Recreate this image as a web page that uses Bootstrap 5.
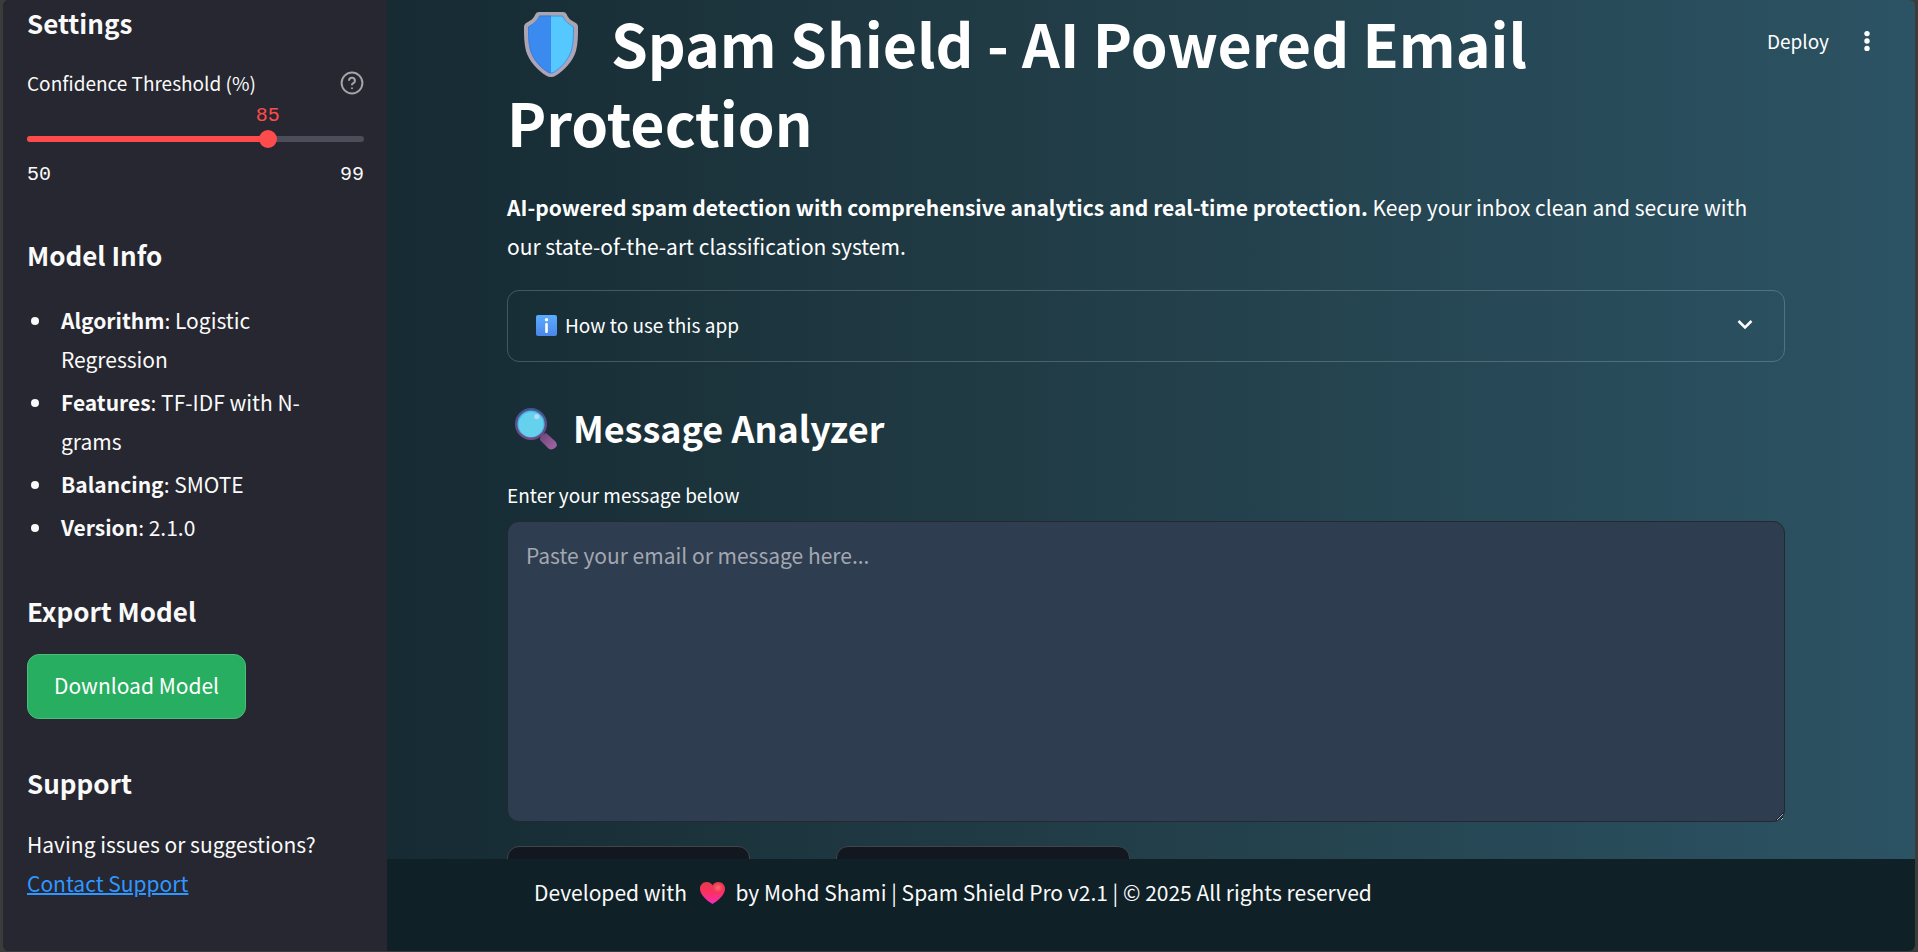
<!DOCTYPE html>
<html lang="en">
<head>
<meta charset="utf-8">
<meta name="viewport" content="width=device-width, initial-scale=1">
<title>Spam Shield</title>
<link rel="stylesheet" href="https://cdn.jsdelivr.net/npm/bootstrap@5.3.0/dist/css/bootstrap.min.css">
<style>
  :root { --app-font: "Noto Sans CJK SC", "Noto Sans", sans-serif; --app-red: #ff4b4b; --app-text: #fafafa; }
  body { background: #3b3b3b; color: var(--app-text); font-family: var(--app-font); font-size: 21px; line-height: 39px; }
  .app-shell { height: 100vh; padding: 0 3px 1px; }
  .app-frame { background: linear-gradient(to right, #0f2027, #203a43, #2c5364); border-radius: 6px; }
  .app-sidebar { width: 384px; background: #262730; padding: 5px 23px 0 24px; }
  .app-sidebar h2 { font-size: 26px; line-height: 36px; font-weight: 600; margin: 0; }
  .field-label { font-size: 19px; line-height: 32px; }
  .threshold-head { margin-top: 26px; }
  .mono-text { font-family: "Liberation Mono", monospace; font-size: 20px; line-height: 24px; }
  .slider-value { height: 24px; margin-top: 5px; color: var(--app-red); }
  .slider-value output { position: absolute; transform: translateX(-50%); }
  .slider-row { height: 18px; margin-top: 2px; }
  .slider-row .progress { height: 6px; background: #4c4d59; border-radius: 3px; }
  .slider-row .progress-bar { background: var(--app-red); }
  .slider-row input { position: absolute; top: 0; left: -9px; width: calc(100% + 18px); height: 18px; margin: 0; appearance: none; background: transparent; }
  .slider-row input::-webkit-slider-thumb { appearance: none; width: 18px; height: 18px; border-radius: 50%; background: var(--app-red); }
  .slider-ends { margin: 15px 0 50px; }
  .info-list { list-style: none; padding: 0 24px 0 34px; margin: 28px 0 46px; }
  .info-list li + li { margin-top: 4px; }
  .info-list li::before { content: ""; display: inline-block; width: 8px; height: 8px; margin: 0 22px 0 -30px; border-radius: 50%; background: currentColor; vertical-align: 4px; }
  .download-btn { height: 65px; margin: 25px 0 46px; padding: 0 26px 2px; background: #27ae60; border: 1px solid #4dbc7c; border-radius: 12px; color: #fff; font-size: 21px; }
  .support-link { color: #2f97ff; text-decoration-thickness: 2px; }
  .app-content { padding: 3px 130px 0 120px; color: #fff; }
  .app-content h1 { font-size: 59px; line-height: 79px; font-weight: 700; margin: 0 0 27px; }
  .app-content h2 { font-size: 36px; line-height: 50px; font-weight: 600; margin: 40px 0 27px; }
  .app-content svg, .app-footer svg { vertical-align: baseline; }
  .h1-icon { width: 54px; height: 65px; margin: 0 33px -9px 17px; }
  .h2-icon { width: 42px; height: 42px; margin: 0 16px -7px 8px; }
  .toolbar { position: absolute; top: 22px; right: 30px; }
  .toolbar button, .how-to { background: none; border: 0; color: #fff; font-size: 19px; line-height: 38px; padding: 0; }
  .toolbar .menu-btn { margin-left: 20px; }
  .app-content .how-to { height: 72px; margin-top: 24px; padding: 0 27px 2px 28px; border: 1px solid rgba(250,250,250,.2); border-radius: 12px; }
  .message-box { height: 301px; margin-top: 10px; padding: 14px 18px; border: 1px solid #262730; border-radius: 12px; font-size: 21px; line-height: 39px; }
  .message-box, .message-box:focus { color: #fff; background: #2e3d50; }
  .message-box::placeholder { color: #a3a8b0; opacity: 1; }
  .action-row { gap: 86px; margin-top: 24px; }
  .action-btn { height: 60px; background: #131720; border: 1px solid #42444b; border-radius: 12px; }
  .analyze-btn { width: 19%; }
  .clear-btn { width: 23%; }
  .app-footer { height: 92px; background: #0f2027; padding: 14px 147px; }
  .heart { width: 25px; height: 22px; margin: 0 6px -3px 8px; }
</style>
</head>
<body>
<div class="app-shell">
  <div class="app-frame d-flex h-100 overflow-hidden">
    <aside class="app-sidebar flex-shrink-0 overflow-hidden">
      <h2>Settings</h2>
      <div class="threshold-head d-flex justify-content-between align-items-center">
        <label for="threshold" class="field-label">Confidence Threshold (%)</label>
        <svg width="24" height="24" viewBox="0 0 24 24" fill="none" stroke="#a3a4a8" stroke-width="2" stroke-linecap="round" stroke-linejoin="round" aria-hidden="true"><circle cx="12" cy="12" r="10.4"/><path d="M9 9a3 3 0 0 1 5.9 1c0 2-2.9 2.6-2.9 3.6M12 17.2v.1"/></svg>
      </div>
      <div class="slider-value position-relative mono-text"><output for="threshold" style="left:71.43%">85</output></div>
      <div class="slider-row position-relative d-flex align-items-center">
        <div class="progress w-100"><div class="progress-bar" style="width:71.43%"></div></div>
        <input type="range" id="threshold" min="50" max="99" value="85">
      </div>
      <div class="slider-ends d-flex justify-content-between mono-text"><span>50</span><span>99</span></div>

      <h2>Model Info</h2>
      <ul class="info-list">
        <li><b>Algorithm</b>: Logistic Regression</li>
        <li><b>Features</b>: TF-IDF with N-grams</li>
        <li><b>Balancing</b>: SMOTE</li>
        <li><b>Version</b>: 2.1.0</li>
      </ul>

      <h2>Export Model</h2>
      <button type="button" class="btn download-btn">Download Model</button>

      <h2>Support</h2>
      <p class="mb-0 mt-4">Having issues or suggestions?<br><a href="#" class="support-link">Contact Support</a></p>
    </aside>

    <div class="d-flex flex-column flex-grow-1 position-relative overflow-hidden">
      <div class="toolbar d-flex align-items-center">
        <button type="button">Deploy</button>
        <button type="button" class="menu-btn d-flex" aria-label="Menu">
          <svg width="36" height="24" viewBox="0 0 36 24" fill="#fff"><circle cx="18" cy="4.6" r="2.7"/><circle cx="18" cy="12" r="2.7"/><circle cx="18" cy="19.4" r="2.7"/></svg>
        </button>
      </div>

      <main class="app-content flex-grow-1 overflow-hidden">
        <h1><svg class="h1-icon" viewBox="0 0 54 65" aria-hidden="true">
            <defs>
              <linearGradient id="rim" x2="0" y2="1"><stop stop-color="#aaa5ae"/><stop offset="1" stop-color="#b0a3b8"/></linearGradient>
            </defs>
            <path fill="url(#rim)" d="M15 0h24q2.500 0 3.500 2c1.500 3.500 3.500 6 8.500 8.500q3 1.500 3 4.500c0 8 0 16-2 24-3 10.500-12 19.500-20 24.500q-5 3-10 0C14 58.500 5 49.500 2 39 0 31 0 23 0 15q0-3 3-4.500C8 8 10 5.500 11.500 2Q12.500 0 15 0z"/>
            <path fill="#3a8af0" d="M15.500 3.500H27v58q-1.500 0-3-1C16 56 8.500 47 6 38 4 31 4 23 4 15.500q0-1 1-1.500c5.500-2.500 8.500-6 10.500-10.500z"/>
            <path fill="#55c8ff" d="M38.500 3.500H27v58q1.500 0 3-1C38 56 45.500 47 48 38c2-7 2-15 2-22.500q0-1-1-1.500c-5.500-2.500-8.500-6-10.500-10.500z"/>
            <path fill="none" stroke="#3274cf" opacity=".6" d="M38.500 4h-23C13.500 8 10.500 11.500 4.500 15c0 8 0 16 2 23 2.500 9 10 17.500 18 22.500q2.500 1 5 0c8-5 15.500-13.500 18-22.500 2-7 2-15 2-23C43.500 11.500 40.500 8 38.500 4"/>
          </svg>Spam Shield - AI Powered Email Protection</h1>
        <p class="mb-0"><b>AI-powered spam detection with comprehensive analytics and real-time protection.</b> Keep your inbox clean and secure with our state-of-the-art classification system.</p>

        <button type="button" class="how-to d-flex align-items-center w-100" aria-expanded="false">
          <svg width="21" height="21" viewBox="0 0 21 21" aria-hidden="true">
            <defs><linearGradient id="tile" x2="0" y2="1"><stop stop-color="#5badff"/><stop offset="1" stop-color="#4a86e8"/></linearGradient></defs>
            <rect width="21" height="21" rx="2" fill="url(#tile)"/><circle cx="10.500" cy="4.800" r="1.700" fill="#fff"/><rect x="9.200" y="8" width="2.600" height="10" rx="1" fill="#fff"/>
          </svg>
          <span class="ms-2">How to use this app</span>
          <svg class="ms-auto" width="24" height="24" viewBox="0 0 24 24" fill="none" stroke="#fff" stroke-width="2.500" aria-hidden="true"><path d="M5.500 8l6.500 6.500L18.500 8"/></svg>
        </button>

        <h2><svg class="h2-icon" viewBox="0 0 42 42" aria-hidden="true">
            <defs>
              <linearGradient id="ring" x2="0" y2="1"><stop stop-color="#425592"/><stop offset="1" stop-color="#744a80"/></linearGradient>
              <linearGradient id="grip" x2="1" y2="1"><stop stop-color="#6f4379"/><stop offset="1" stop-color="#a368a6"/></linearGradient>
            </defs>
            <path fill="url(#grip)" d="M31 25l9.500 8.500q2.500 3 .500 5.500-3 3.500-7 2L25 32q-.500-5 6-7z"/>
            <circle cx="16" cy="16" r="16" fill="url(#ring)"/><circle cx="16" cy="16" r="13.600" fill="#48b7e9"/><circle cx="16" cy="16.500" r="12.400" fill="#65d1ec"/><circle cx="21.800" cy="8.500" r="2.600" fill="#b4dcf8"/>
          </svg>Message Analyzer</h2>
        <label for="message" class="field-label d-block">Enter your message below</label>
        <textarea id="message" class="form-control message-box" placeholder="Paste your email or message here..."></textarea>
        <div class="action-row d-flex">
          <button type="button" class="btn action-btn analyze-btn" aria-label="Analyze"></button>
          <button type="button" class="btn action-btn clear-btn" aria-label="Clear"></button>
        </div>
      </main>

      <footer class="app-footer flex-shrink-0">Developed with <svg class="heart" viewBox="0 0 25 23" preserveAspectRatio="none" role="img" aria-label="love">
          <defs>
            <linearGradient id="love" x2="0" y2="1"><stop stop-color="#e83a48"/><stop offset=".55" stop-color="#fb3068"/><stop offset="1" stop-color="#f52cc0"/></linearGradient>
            <radialGradient id="shine"><stop stop-color="#ff6a70"/><stop offset="1" stop-color="#ff6a70" stop-opacity="0"/></radialGradient>
          </defs>
          <path fill="url(#love)" d="M12.500 23C8 20 0 14 0 7c0-4 3-7 6.500-7 3 0 5 1.500 6 3.500 1-2 3-3.500 6-3.500C22 0 25 3 25 7c0 7-8 13-12.500 16z"/>
          <ellipse cx="18" cy="6" rx="5" ry="5" fill="url(#shine)"/>
        </svg> by Mohd Shami | Spam Shield Pro v2.1 | © 2025 All rights reserved</footer>
    </div>
  </div>
</div>
<script src="https://cdn.jsdelivr.net/npm/bootstrap@5.3.0/dist/js/bootstrap.bundle.min.js"></script>
</body>
</html>
